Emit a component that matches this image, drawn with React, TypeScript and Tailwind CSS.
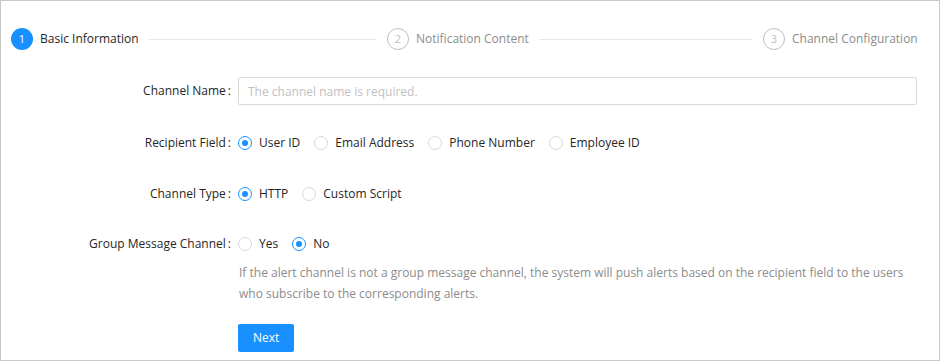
import React from "react";

const font = { fontFamily: '"Open Sans", "Noto Sans", sans-serif' };

function Radio({ label, checked }: { label: string; checked?: boolean }) {
  return (
    <label className="flex items-center mr-[7px]">
      <span
        className={
          "w-[14px] h-[14px] rounded-full border flex items-center justify-center bg-white " +
          (checked ? "border-[#1890ff]" : "border-[#d9d9d9]")
        }
      >
        {checked && <span className="w-[6px] h-[6px] rounded-full bg-[#1890ff]" />}
      </span>
      <span className="px-[7px] text-[12px] text-[#262626]">{label}</span>
    </label>
  );
}

function Step({
  n,
  title,
  active,
  last,
}: {
  n: number;
  title: string;
  active?: boolean;
  last?: boolean;
}) {
  return (
    <div className={"flex items-center " + (last ? "shrink-0" : "w-[376px] shrink-0")}>
      <span
        className={
          "w-[22px] h-[22px] rounded-full flex items-center justify-center text-[11px] shrink-0 " +
          (active
            ? "bg-[#1890ff] text-white"
            : "border border-[#bfbfbf] text-[#bfbfbf]")
        }
      >
        {n}
      </span>
      <span
        className={
          "ml-[7px] text-[12px] shrink-0 " + (active ? "text-[#262626]" : "text-[#8c8c8c]")
        }
      >
        {title}
      </span>
      {!last && <div className="flex-1 h-px bg-[#e8e8e8] ml-[10px] mr-[11px]" />}
    </div>
  );
}

function FormRow({
  label,
  children,
  className = "",
}: {
  label: string;
  children: React.ReactNode;
  className?: string;
}) {
  return (
    <div className={"flex items-center pr-[22px] " + className}>
      <div className="w-[230px] text-right text-[12px] text-[#262626] shrink-0">
        {label}
        <span className="ml-[2px]">:</span>
      </div>
      <div className="ml-[7px] flex-1 flex items-center">{children}</div>
    </div>
  );
}

export default function App() {
  return (
    <div
      className="w-[940px] h-[361px] border border-[#c8c8c8] bg-white flex flex-col"
      style={font}
    >
      {/* steps */}
      <div className="flex items-center pl-[10px] pt-[27px]">
        <Step n={1} title="Basic Information" active />
        <Step n={2} title="Notification Content" />
        <Step n={3} title="Channel Configuration" last />
      </div>

      {/* form */}
      <FormRow label="Channel Name" className="mt-[27px] h-[28px]">
        <input
          className="w-full h-[28px] border border-[#d9d9d9] rounded-[2px] px-[9px] text-[12px] placeholder:text-[#bfbfbf] outline-none"
          placeholder="The channel name is required."
        />
      </FormRow>

      <FormRow label="Recipient Field" className="mt-[24px] h-[28px]">
        <Radio label="User ID" checked />
        <Radio label="Email Address" />
        <Radio label="Phone Number" />
        <Radio label="Employee ID" />
      </FormRow>

      <FormRow label="Channel Type" className="mt-[23px] h-[28px]">
        <Radio label="HTTP" checked />
        <Radio label="Custom Script" />
      </FormRow>

      <FormRow label="Group Message Channel" className="mt-[22px] h-[28px]">
        <Radio label="Yes" />
        <Radio label="No" checked />
      </FormRow>

      <div className="ml-[238px] pr-[22px] mt-[4px] text-[12px] leading-[21px] text-[#8c8c8c]">
        If the alert channel is not a group message channel, the system will push alerts based on the
        recipient field to the users who subscribe to the corresponding alerts.
      </div>

      <div className="ml-[237px] mt-[20px]">
        <button className="h-[28px] px-[15px] rounded-[2px] bg-[#1890ff] text-white text-[12px]">
          Next
        </button>
      </div>
    </div>
  );
}
